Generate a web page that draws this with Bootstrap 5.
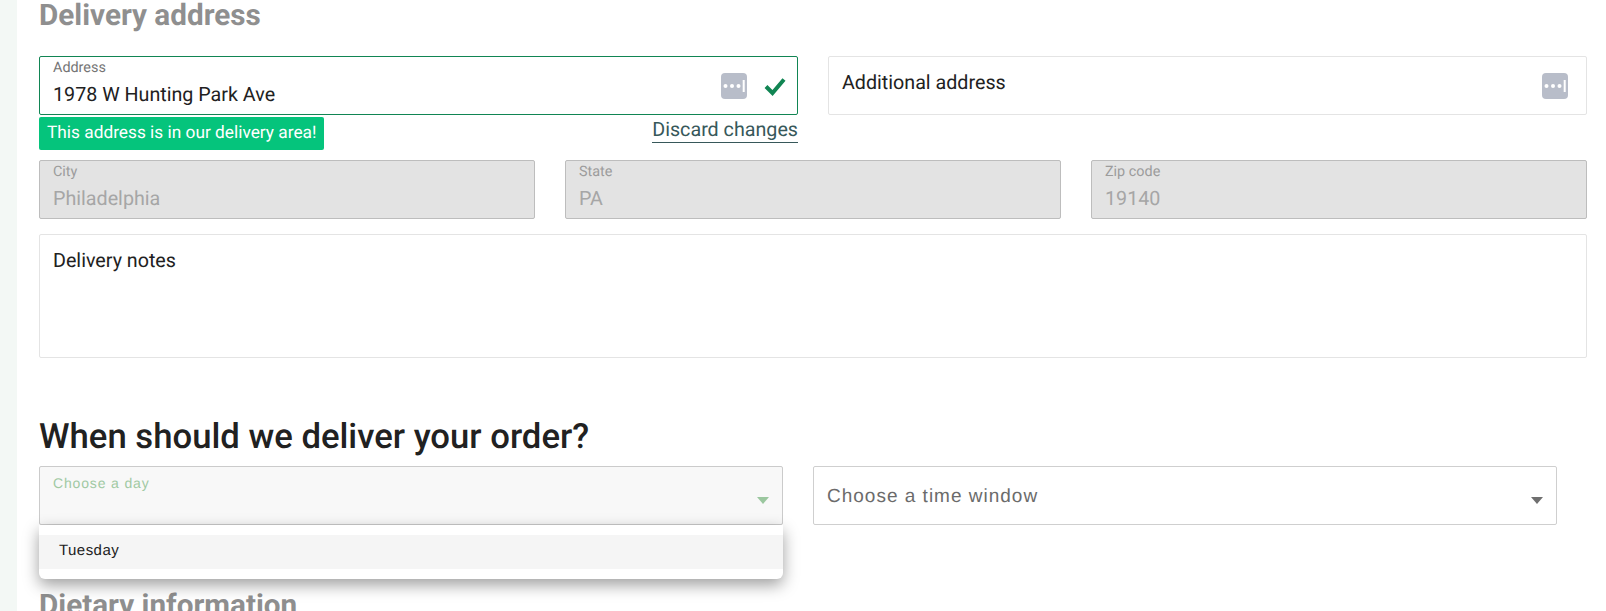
<!DOCTYPE html>
<html lang="en">
<head>
<meta charset="utf-8">
<title>Delivery address</title>
<link href="https://cdn.jsdelivr.net/npm/bootstrap@5.3.0/dist/css/bootstrap.min.css" rel="stylesheet">
<style>
html,body{height:611px;overflow:hidden;background:#fff}
body{font-family:Roboto,"Liberation Sans",sans-serif;color:#212121;text-rendering:geometricPrecision}
.sidebar-strip{width:17px;flex:none;background:#f3f8f5;height:611px}
.page-main{width:1548px;margin-left:22px;padding-top:1px}
.sec-title{font-size:29.7px;font-weight:700;line-height:30px;color:#8f8f8f;margin:0}
.sec-title-top{margin-top:0;margin-bottom:25px}
.main-title{font-size:34.7px;font-weight:500;line-height:40px;color:#212121;margin:59px 0 9px}
.diet-title{margin-top:66px}
.fld{height:59px;border:1px solid #e4e4e4;border-radius:2px;background:#fff;position:relative;padding:0 13px;min-width:0}
.fld-ok{border-color:#118553}
.fld-off{background:#e3e3e3;border-color:#bdbdbd}
.fld-lab{font-size:14.4px;line-height:16px;color:#757575;padding-top:3px;display:block}
.fld-val{font-size:19.7px;line-height:24px;display:block;margin-top:7px;color:#212121}
.fld-off .fld-lab{color:#9c9c9c}
.fld-off .fld-val{color:#a6a6a6}
.fld-ph{font-size:19.7px;line-height:24px;display:block;padding-top:14px}
.fld-notes{height:124px;margin-top:15px}
.ic-key{position:absolute;top:16px;right:50px;width:26px;height:26px}
.ic-key-solo{right:18px}
.ic-check{position:absolute;top:18px;right:11px;width:22px;height:22px}
.row-gap{gap:30px}
.half{flex:1 1 0}
.addr-meta{height:45px;margin-top:0}
.ok-tag{background:#05c47c;color:#fff;font-size:17.3px;line-height:24px;height:33px;padding:4px 8px;border-radius:2px;margin-top:2px}
.discard{font-size:19.7px;line-height:24px;color:#37585a;text-decoration:none;border-bottom:1px solid #37585a;margin-top:3px;height:25px}
.sel{height:59px;flex:0 0 744px;border:1px solid #cfcfcf;border-radius:2px;position:relative;padding:0 13px;background:#fff;font-family:"Liberation Sans",Arial,sans-serif}
.sel-open{background:#f8f8f8;border-color:#cbcbcb}
.sel-lab{font-size:14px;line-height:16px;letter-spacing:.85px;color:#a0c9a3;display:block;padding-top:8px}
.sel-ph{font-size:19px;line-height:24px;letter-spacing:1px;color:#6b6b6b;display:block;padding-top:18px}
.tri{position:absolute;right:13px;top:30px;width:0;height:0;border-left:6.5px solid transparent;border-right:6.5px solid transparent;border-top:7px solid #6f6f6f}
.tri-open{border-top-color:#9bc79f}
.day-menu{position:absolute;left:-1px;right:-1px;top:58px;background:#fff;padding:10px 0;border-radius:0 0 6px 6px;box-shadow:0 6px 16px rgba(0,0,0,.38);z-index:5}
.day-opt{height:34px;line-height:32px;background:#f5f5f5;font-size:15px;letter-spacing:.45px;padding-left:20px;color:#212121}
</style>
</head>
<body>
<div class="d-flex">
<div class="sidebar-strip"></div>
<main class="page-main">
<h2 class="sec-title sec-title-top">Delivery address</h2>
<div class="d-flex row-gap">
  <div class="half">
    <div class="fld fld-ok">
      <span class="fld-lab">Address</span><span class="fld-val">1978 W Hunting Park Ave</span>
      <svg class="ic-key" viewBox="0 0 26 26"><rect width="26" height="26" rx="4" fill="#b8bdc9"/><circle cx="4.5" cy="13" r="2" fill="#fff"/><circle cx="11" cy="13" r="2" fill="#fff"/><circle cx="17.5" cy="13" r="2" fill="#fff"/><rect x="21.7" y="7" width="2" height="12" fill="#fff"/></svg>
      <svg class="ic-check" viewBox="0 0 22 22"><path d="M2 11.5 8.5 18 20 4.5" fill="none" stroke="#118553" stroke-width="4"/></svg>
    </div>
    <div class="d-flex justify-content-between align-items-start addr-meta">
      <div class="ok-tag">This address is in our delivery area!</div>
      <a class="discard" href="#">Discard changes</a>
    </div>
  </div>
  <div class="half">
    <div class="fld">
      <span class="fld-ph">Additional address</span>
      <svg class="ic-key ic-key-solo" viewBox="0 0 26 26"><rect width="26" height="26" rx="4" fill="#b8bdc9"/><circle cx="4.5" cy="13" r="2" fill="#fff"/><circle cx="11" cy="13" r="2" fill="#fff"/><circle cx="17.5" cy="13" r="2" fill="#fff"/><rect x="21.7" y="7" width="2" height="12" fill="#fff"/></svg>
    </div>
  </div>
</div>
<div class="d-flex row-gap">
  <div class="fld fld-off half"><span class="fld-lab">City</span><span class="fld-val">Philadelphia</span></div>
  <div class="fld fld-off half"><span class="fld-lab">State</span><span class="fld-val">PA</span></div>
  <div class="fld fld-off half"><span class="fld-lab">Zip code</span><span class="fld-val">19140</span></div>
</div>
<div class="fld fld-notes"><span class="fld-ph">Delivery notes</span></div>
<h2 class="main-title">When should we deliver your order?</h2>
<div class="d-flex row-gap">
  <div class="sel sel-open">
    <span class="sel-lab">Choose a day</span>
    <span class="tri tri-open"></span>
    <div class="day-menu"><div class="day-opt">Tuesday</div></div>
  </div>
  <div class="sel">
    <span class="sel-ph">Choose a time window</span>
    <span class="tri"></span>
  </div>
</div>
<h2 class="sec-title diet-title">Dietary information</h2>
</main>
</div>
<script src="https://cdn.jsdelivr.net/npm/bootstrap@5.3.0/dist/js/bootstrap.bundle.min.js"></script>
</body>
</html>
